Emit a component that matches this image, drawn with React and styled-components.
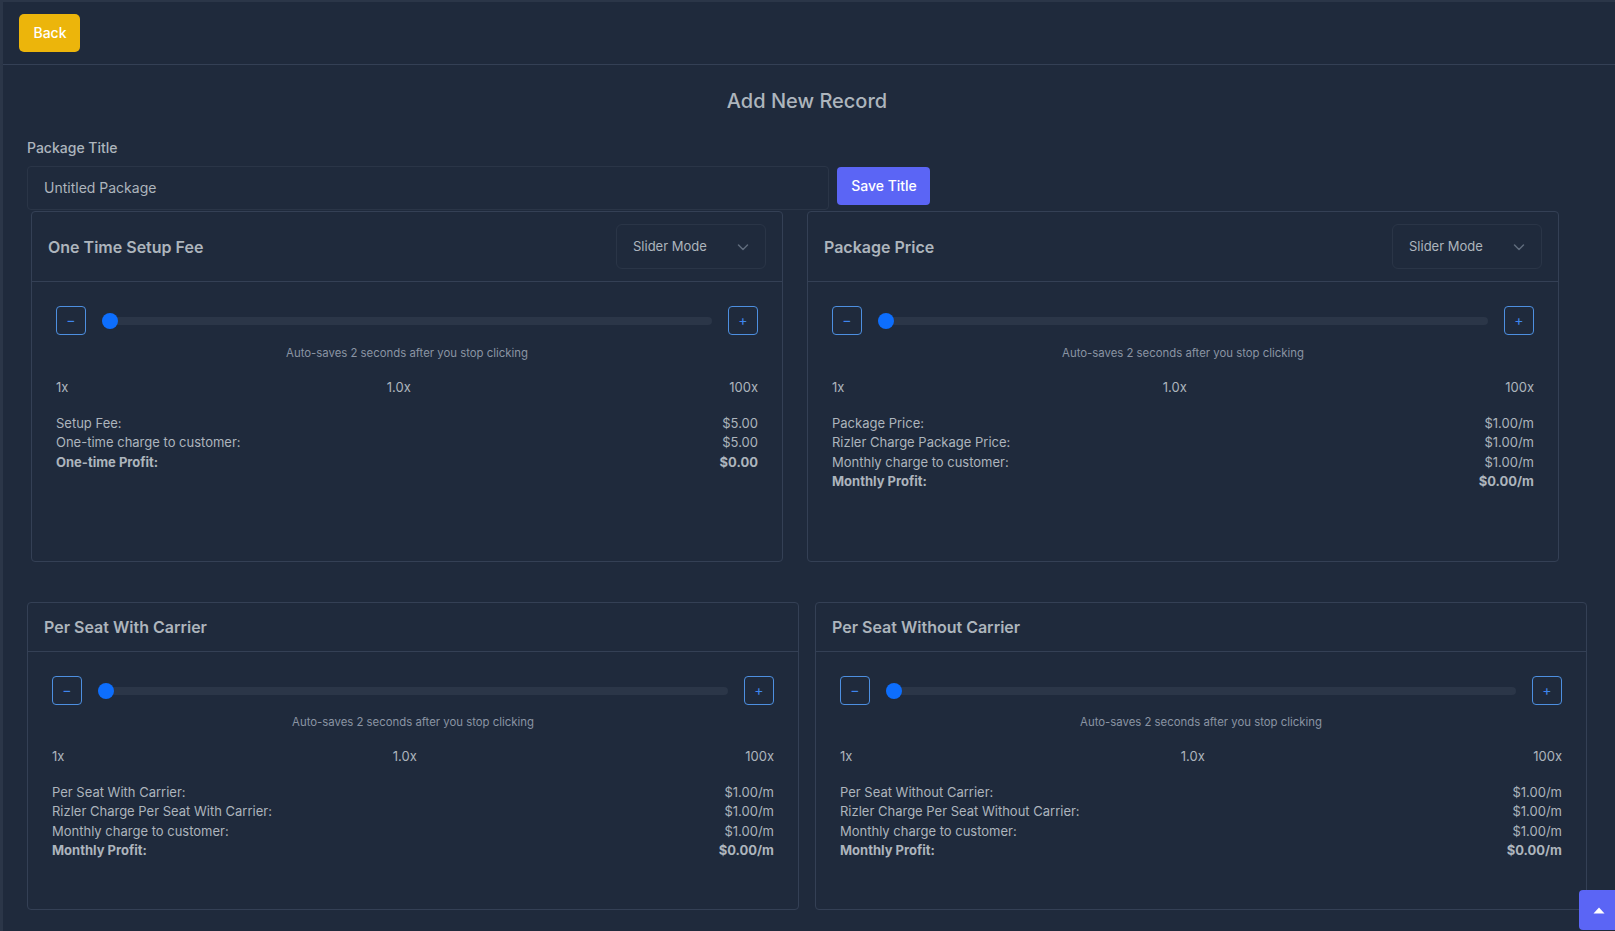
import React from 'react';
import styled, { createGlobalStyle } from 'styled-components';

const GlobalStyle = createGlobalStyle`
  html, body {
    margin: 0;
    height: 100%;
    overflow: hidden;
    background: #1f2a3c;
  }
  * { box-sizing: border-box; }
  body {
    font-family: Inter, "Liberation Sans", sans-serif;
    font-size: 13px;
    line-height: 19.5px;
    color: #adb5bd;
  }
`;

const Shell = styled.div`
  height: 931px;
  background: #1f2a3c;
  border-top: 2px solid #2b3648;
  border-left: 3px solid #2b3648;
`;

const TopBar = styled.div`
  height: 63px;
  padding: 12px 16px;
  border-bottom: 1px solid #344055;
`;

const BackButton = styled.button`
  display: block;
  width: 61px;
  height: 38px;
  padding: 0 0 1px 1px;
  border: 0;
  border-radius: 5px;
  background: #ecb50b;
  color: #fff;
  font: 500 14px Inter, sans-serif;
`;

const Content = styled.div`
  padding: 0 28px 0 24px;
`;

const PageTitle = styled.h4`
  margin: 0;
  padding-top: 21px;
  height: 72px;
  text-align: center;
  font-size: 20px;
  line-height: 30px;
  font-weight: 500;
`;

const FieldLabel = styled.label`
  display: block;
  height: 29px;
  padding-top: 1px;
  font-size: 14px;
  line-height: 20px;
  font-weight: 500;
`;

const TitleRow = styled.div`
  display: flex;
  gap: 8px;
  align-items: flex-start;
`;

const TitleInput = styled.input`
  width: 802px;
  height: 44px;
  padding: 0 16px 2px;
  background: transparent;
  border: 1px solid #2a3547;
  border-radius: 4px;
  color: #adb5bd;
  font: 400 14px Inter, sans-serif;
  outline: none;
`;

const SaveButton = styled.button`
  width: 93px;
  height: 38px;
  margin-top: 1px;
  padding: 0 0 2px 1px;
  border: 0;
  border-radius: 4px;
  background: #5b65f5;
  color: #fff;
  font: 500 14px Inter, sans-serif;
`;

const TopGrid = styled.div`
  display: grid;
  grid-template-columns: 752px 752px;
  gap: 24px;
  margin: 1px 0 0 4px;
`;

const BottomGrid = styled.div`
  display: grid;
  grid-template-columns: 772px 772px;
  gap: 16px;
  margin-top: 40.5px;
`;

const Card = styled.section`
  border: 1px solid #344055;
  border-radius: 4px;
`;

const CardHeader = styled.header`
  display: flex;
  align-items: center;
  justify-content: space-between;
  height: ${(p) => p.$height}px;
  padding: 0 16px;
  border-bottom: 1px solid #344055;
`;

const CardTitle = styled.h5`
  margin: 0;
  font-size: 16px;
  line-height: 24px;
  font-weight: 600;
`;

const ModeSelect = styled.div`
  display: flex;
  align-items: center;
  justify-content: space-between;
  width: 150px;
  height: 45px;
  padding: 0 14px 0 16px;
  border: 1px solid #2a3547;
  border-radius: 6px;
  font-size: 13px;
`;

const CardBody = styled.div`
  padding: 24px 24px ${(p) => p.$bottom}px;
`;

const Stepper = styled.div`
  display: flex;
  align-items: center;
  gap: 16px;
  height: 29px;
`;

const StepButton = styled.button`
  flex: none;
  width: 30px;
  height: 29px;
  padding: 0 0 2px;
  border: 1px solid #4d8fe0;
  border-radius: 4px;
  background: transparent;
  color: #3f86ee;
  font: 400 14px Inter, sans-serif;
`;

const Range = styled.input`
  flex: 1;
  min-width: 0;
  height: 16px;
  margin: 0;
  appearance: none;
  background: transparent;

  &::-webkit-slider-runnable-track {
    height: 8px;
    border-radius: 4px;
    background: #2b3648;
  }

  &::-webkit-slider-thumb {
    appearance: none;
    width: 16px;
    height: 16px;
    margin-top: -4px;
    border-radius: 50%;
    background: #0d6efd;
  }
`;

const Hint = styled.div`
  margin-top: ${(p) => p.$gap}px;
  text-align: center;
  font-size: 11.375px;
  line-height: 17px;
  color: #8a94a3;
`;

const ScaleRow = styled.div`
  display: flex;
  justify-content: space-between;
  margin-top: 16px;
`;

const Summary = styled.div`
  margin-top: 16px;
`;

const SummaryRow = styled.div`
  display: flex;
  justify-content: space-between;
  font-weight: ${(p) => (p.$strong ? 700 : 400)};
`;

const ScrollTop = styled.button`
  position: fixed;
  right: 0;
  bottom: 1px;
  display: flex;
  align-items: center;
  justify-content: center;
  width: 36px;
  height: 40px;
  padding: 0 0 0 3px;
  border: 0;
  border-radius: 4px 0 0 4px;
  background: #5b65f5;
`;

const cards = {
  top: [
    {
      title: 'One Time Setup Fee',
      rows: [
        ['Setup Fee:', '$5.00'],
        ['One-time charge to customer:', '$5.00'],
        ['One-time Profit:', '$0.00', true],
      ],
    },
    {
      title: 'Package Price',
      rows: [
        ['Package Price:', '$1.00/m'],
        ['Rizler Charge Package Price:', '$1.00/m'],
        ['Monthly charge to customer:', '$1.00/m'],
        ['Monthly Profit:', '$0.00/m', true],
      ],
    },
  ],
  bottom: [
    {
      title: 'Per Seat With Carrier',
      rows: [
        ['Per Seat With Carrier:', '$1.00/m'],
        ['Rizler Charge Per Seat With Carrier:', '$1.00/m'],
        ['Monthly charge to customer:', '$1.00/m'],
        ['Monthly Profit:', '$0.00/m', true],
      ],
    },
    {
      title: 'Per Seat Without Carrier',
      rows: [
        ['Per Seat Without Carrier:', '$1.00/m'],
        ['Rizler Charge Per Seat Without Carrier:', '$1.00/m'],
        ['Monthly charge to customer:', '$1.00/m'],
        ['Monthly Profit:', '$0.00/m', true],
      ],
    },
  ],
};

function PricingCard({ title, rows, withMode, bodyBottom }) {
  return (
    <Card>
      <CardHeader $height={withMode ? 70 : 49}>
        <CardTitle>{title}</CardTitle>
        {withMode && (
          <ModeSelect>
            Slider Mode
            <svg width="16" height="16" viewBox="0 0 16 16" fill="none" stroke="#5f6b7c" strokeWidth="1.5" strokeLinecap="round" strokeLinejoin="round">
              <path d="m3.5 6 4.5 4.5L12.5 6" />
            </svg>
          </ModeSelect>
        )}
      </CardHeader>
      <CardBody $bottom={bodyBottom}>
        <Stepper>
          <StepButton>−</StepButton>
          <Range type="range" min="1" max="100" defaultValue="1" />
          <StepButton>+</StepButton>
        </Stepper>
        <Hint $gap={withMode ? 10 : 9}>Auto-saves 2 seconds after you stop clicking</Hint>
        <ScaleRow>
          <span>1x</span>
          <span>1.0x</span>
          <span>100x</span>
        </ScaleRow>
        <Summary>
          {rows.map(([label, value, strong]) => (
            <SummaryRow key={label} $strong={strong}>
              <span>{label}</span>
              <span>{value}</span>
            </SummaryRow>
          ))}
        </Summary>
      </CardBody>
    </Card>
  );
}

export default function App() {
  return (
    <>
      <GlobalStyle />
      <Shell>
        <TopBar>
          <BackButton>Back</BackButton>
        </TopBar>
        <Content>
          <PageTitle>Add New Record</PageTitle>
          <FieldLabel>Package Title</FieldLabel>
          <TitleRow>
            <TitleInput defaultValue="Untitled Package" />
            <SaveButton>Save Title</SaveButton>
          </TitleRow>
          <TopGrid>
            {cards.top.map((c) => (
              <PricingCard key={c.title} {...c} withMode bodyBottom={69} />
            ))}
          </TopGrid>
          <BottomGrid>
            {cards.bottom.map((c) => (
              <PricingCard key={c.title} {...c} bodyBottom={48} />
            ))}
          </BottomGrid>
        </Content>
      </Shell>
      <ScrollTop aria-label="Scroll to top">
        <svg width="12" height="7" viewBox="0 0 12 7" fill="#fff">
          <path d="M6 0.5 11.5 6.5H0.5Z" />
        </svg>
      </ScrollTop>
    </>
  );
}
